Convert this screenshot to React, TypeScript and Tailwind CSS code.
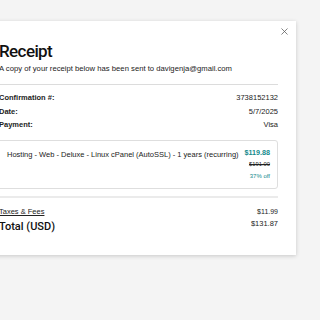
import { X } from "lucide-react";

const details = [
  { label: "Confirmation #:", value: "3738152132" },
  { label: "Date:", value: "5/7/2025" },
  { label: "Payment:", value: "Visa" },
];

export default function App() {
  return (
    <div
      className="min-h-[320px] overflow-hidden bg-[#f4f4f4] pt-[21px] text-[#111]"
      style={{ fontFamily: '"Liberation Sans", Arial, sans-serif' }}
    >
      <div className="-ml-[19px] w-[315px] bg-white px-[18px] pb-[19.5px] shadow-[0_1px_4px_rgba(0,0,0,0.18)]">
        {/* Close */}
        <div className="-mr-[12px] flex h-[20px] items-start justify-end pt-[5px]">
          <X className="h-[11px] w-[11px] text-[#555]" strokeWidth={1.6} />
        </div>

        {/* Header */}
        <h2
          className="text-[17px] leading-[20px] font-medium tracking-[-0.6px]"
          style={{ fontFamily: "Roboto, sans-serif" }}
        >
          Receipt
        </h2>
        <p className="mt-[3px] text-[7.7px] leading-[10px] text-[#222]">
          A copy of your receipt below has been sent to davigenja@gmail.com
        </p>

        <div className="mt-[10px] h-px bg-[#dcdcdc]" />

        {/* Details */}
        <div className="mt-[6px] flex flex-col">
          {details.map((d) => (
            <div key={d.label} className="flex h-[13.5px] items-center justify-between text-[7.5px]">
              <span className="font-bold text-[#222]">{d.label}</span>
              <span className="text-[#222]">{d.value}</span>
            </div>
          ))}
        </div>

        {/* Line item */}
        <div className="-ml-[4px] mt-[8px] flex h-[49px] items-start justify-between rounded-[3px] border border-[#dedede] pl-[11px] pr-[7px] pt-[7px]">
          <span className="mt-[2px] text-[7.5px] leading-[10px] text-[#222]">
            Hosting - Web - Deluxe - Linux cPanel (AutoSSL) - 1 years (recurring)
          </span>
          <div className="flex flex-col items-end">
            <span className="text-[7.2px] leading-[10px] font-bold text-[#138a8c]">$119.88</span>
            <span className="mt-[1px] text-[5.8px] leading-[10px] text-[#222] line-through">$191.00</span>
            <span className="mt-[2px] text-[6px] leading-[10px] text-[#138a8c]">37% off</span>
          </div>
        </div>

        <div className="mt-[7px] h-[2px] bg-[#ebebeb]" />

        {/* Totals */}
        <div className="mt-[9px] flex items-center justify-between leading-[10px]">
          <span className="text-[7.5px] text-[#222] underline">Taxes &amp; Fees</span>
          <span className="text-[7px] text-[#222]">$11.99</span>
        </div>
        <div className="mt-[2.5px] flex items-start justify-between">
          <span
            className="text-[11px] leading-[16px] font-medium"
            style={{ fontFamily: "Roboto, sans-serif" }}
          >
            Total (USD)
          </span>
          <span className="text-[7.5px] leading-[10px] text-[#222]">$131.87</span>
        </div>
      </div>
    </div>
  );
}
